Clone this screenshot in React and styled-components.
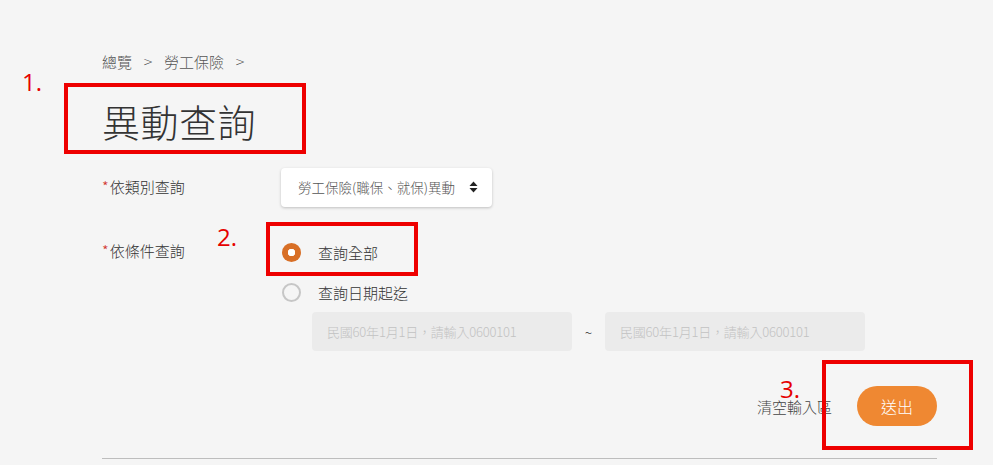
import React from "react";
import styled, { createGlobalStyle } from "styled-components";

const Global = createGlobalStyle`
  html, body { margin: 0; padding: 0; background: #f5f5f5; }
  body { font-family: "Noto Sans CJK TC", "Noto Sans", sans-serif; color: #333; font-weight: 300; }
  * { box-sizing: border-box; }
`;

const Page = styled.div`
  position: relative;
  width: 993px;
  height: 465px;
  overflow: hidden;
  background: #f5f5f5;
`;

const Container = styled.div`
  width: 835px;
  margin-left: 102px;
  padding-top: 50px;
  display: flex;
  flex-direction: column;
`;

const Breadcrumb = styled.div`
  display: flex;
  align-items: center;
  gap: 9px;
  font-size: 15px;
  line-height: 24px;
  color: #555;
`;

const Sep = styled.span`
  font-family: "DejaVu Sans", sans-serif;
  font-size: 12px;
  color: #444;
  margin: 0 2px;
`;

const Title = styled.h1`
  margin: 23px 0 0;
  font-size: 38px;
  line-height: 48px;
  font-weight: 300;
  color: #333;
  letter-spacing: 0.5px;
`;

const Row = styled.div`
  display: flex;
  align-items: ${(p) => (p.$top ? "flex-start" : "center")};
  margin-top: ${(p) => p.$mt}px;
`;

const Label = styled.div`
  width: 179px;
  flex: none;
  font-size: 15px;
  line-height: 40px;
  color: #333;
`;

const Star = styled.span`
  color: #d0302a;
  margin-right: 1px;
`;

const Select = styled.div`
  width: 211px;
  height: 39px;
  background: #fff;
  border-radius: 4px;
  box-shadow: 0 1px 3px rgba(0, 0, 0, 0.22);
  display: flex;
  align-items: center;
  justify-content: space-between;
  padding: 0 14px 0 17px;
  font-size: 13.5px;
  color: #555;
`;

const Options = styled.div`
  display: flex;
  flex-direction: column;
  padding-top: 1px;
`;

const RadioRow = styled.label`
  display: flex;
  align-items: center;
  height: 40px;
  gap: 17px;
  font-size: 15px;
  color: #333;
`;

const RadioDot = styled.span`
  width: 19px;
  height: 19px;
  margin-left: 1px;
  border-radius: 50%;
  flex: none;
  ${(p) =>
    p.$on
      ? `background: #d86f26; background-image: radial-gradient(circle, #fff 0 3.5px, #d86f26 4px);`
      : `border: 2px solid #c6c6c6; background: transparent;`}
`;

const DateRow = styled.div`
  display: flex;
  align-items: center;
  margin-left: 31px;
  margin-top: 0px;
  gap: 10px;
`;

const DateInput = styled.div`
  width: 260px;
  height: 39px;
  border-radius: 4px;
  background: #ebebeb;
  display: flex;
  align-items: center;
  padding-left: 15px;
  font-size: 13px;
  letter-spacing: -0.2px;
  color: #c2c2c2;
`;

const Tilde = styled.span`
  width: 13px;
  text-align: center;
  font-size: 14px;
  color: #333;
`;

const Actions = styled.div`
  display: flex;
  justify-content: flex-end;
  align-items: center;
  gap: 25px;
  margin-top: 35px;
`;

const Clear = styled.span`
  font-size: 15px;
  color: #444;
`;

const Submit = styled.button`
  width: 80px;
  height: 40px;
  border: none;
  border-radius: 20px;
  background: #ef8832;
  color: #fff;
  font-family: inherit;
  font-weight: 300;
  font-size: 16px;
  padding: 0;
`;

const Divider = styled.div`
  margin-top: 32px;
  height: 1px;
  background: #bdbdbd;
`;

const Mark = styled.div`
  position: absolute;
  left: ${(p) => p.$x}px;
  top: ${(p) => p.$y}px;
  width: ${(p) => p.$w}px;
  height: ${(p) => p.$h}px;
  border: 4px solid #ee0000;
  pointer-events: none;
`;

const Num = styled.div`
  position: absolute;
  left: ${(p) => p.$x}px;
  top: ${(p) => p.$y}px;
  color: #e60000;
  font-family: "Open Sans", "Noto Sans", sans-serif;
  font-weight: 400;
  font-size: 24px;
  line-height: 28px;
`;

const SortIcon = () => (
  <svg width="9" height="12" viewBox="0 0 9 12">
    <path d="M4.5 0.5 L8.5 5 H0.5 Z" fill="#222" />
    <path d="M4.5 11.5 L8.5 7 H0.5 Z" fill="#222" />
  </svg>
);

export default function App() {
  return (
    <Page>
      <Global />
      <Container>
        <Breadcrumb>
          <span>總覽</span>
          <Sep>&gt;</Sep>
          <span>勞工保險</span>
          <Sep>&gt;</Sep>
        </Breadcrumb>
        <Title>異動查詢</Title>
        <Row $mt={22}>
          <Label>
            <Star>*</Star>依類別查詢
          </Label>
          <Select>
            <span>勞工保險(職保、就保)異動</span>
            <SortIcon />
          </Select>
        </Row>
        <Row $mt={24} $top>
          <Label>
            <Star>*</Star>依條件查詢
          </Label>
          <Options>
            <RadioRow>
              <RadioDot $on />
              <span>查詢全部</span>
            </RadioRow>
            <RadioRow>
              <RadioDot />
              <span>查詢日期起迄</span>
            </RadioRow>
            <DateRow>
              <DateInput>民國60年1月1日，請輸入0600101</DateInput>
              <Tilde>~</Tilde>
              <DateInput>民國60年1月1日，請輸入0600101</DateInput>
            </DateRow>
          </Options>
        </Row>
        <Actions>
          <Clear>清空輸入區</Clear>
          <Submit>送出</Submit>
        </Actions>
        <Divider />
      </Container>

      <Num $x={22} $y={68}>1.</Num>
      <Mark $x={64} $y={83} $w={242} $h={71} />
      <Num $x={217} $y={223}>2.</Num>
      <Mark $x={266} $y={222} $w={152} $h={54} />
      <Num $x={780} $y={375}>3.</Num>
      <Mark $x={822} $y={360} $w={151} $h={90} />
    </Page>
  );
}
